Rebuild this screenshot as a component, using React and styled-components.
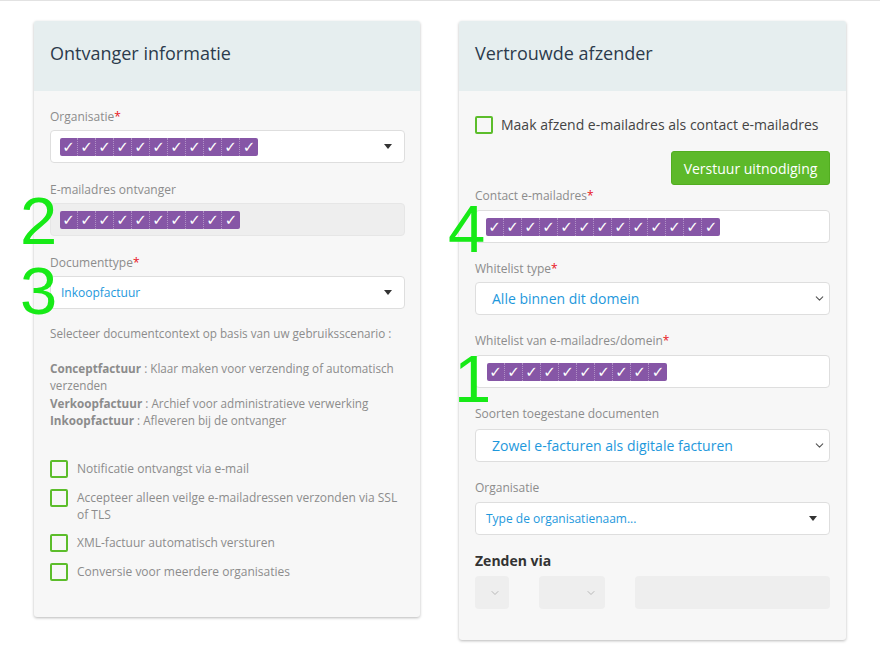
import styled, { createGlobalStyle } from "styled-components";
import { ChevronDown } from "lucide-react";

const GlobalStyle = createGlobalStyle`
  html, body {
    margin: 0;
    padding: 0;
    background: #ffffff;
    font-family: "Open Sans", "Liberation Sans", sans-serif;
  }
`;

const Page = styled.div`
  position: relative;
  border-top: 1px solid #e2e2e2;
  padding: 20px 34px 20px 34px;
  display: grid;
  grid-template-columns: 386px 387px;
  column-gap: 39px;
  align-items: start;
`;

const Card = styled.div`
  background: #f7f7f7;
  border-radius: 3px;
  box-shadow: 0 1px 3px rgba(0, 0, 0, 0.28);
  overflow: hidden;
`;

const CardHeader = styled.div`
  background: #e6eeef;
  height: 70px;
  box-sizing: border-box;
  padding: 20px 16px 0 16px;
`;

const Title = styled.h3`
  margin: 0;
  font-size: 18px;
  line-height: 24px;
  font-weight: 400;
  color: #2c3b4c;
`;

const CardBody = styled.div`
  padding: ${(p) => p.$pad || "17px 15px 36px 16px"};
`;

const Field = styled.div`
  margin-bottom: ${(p) => (p.$mb != null ? p.$mb : 18)}px;
`;

const Label = styled.div`
  font-size: 12px;
  line-height: 18px;
  color: #8c8c8c;
  margin-bottom: ${(p) => (p.$mb != null ? p.$mb : 4)}px;
`;

const Req = styled.span`
  color: #e8141b;
`;

const Control = styled.div`
  height: 33px;
  box-sizing: border-box;
  display: flex;
  align-items: center;
  justify-content: space-between;
  padding: 0 ${(p) => p.$pr || 12}px 0 ${(p) => p.$pl || 9}px;
  background: ${(p) => (p.$disabled ? "#eeeeee" : "#ffffff")};
  border: 1px solid ${(p) => (p.$disabled ? "#e6e6e6" : "#dedede")};
  border-radius: 4px;
`;

const ValueText = styled.span`
  font-size: ${(p) => p.$size || 12}px;
  color: #1e98dc;
  white-space: nowrap;
`;

const Caret = styled.span`
  width: 0;
  height: 0;
  border-left: 4.5px solid transparent;
  border-right: 4.5px solid transparent;
  border-top: 5px solid #333;
`;

const Redacted = styled.span`
  display: inline-flex;
  height: 18px;
  background: #8656a6;
  border-radius: 2px;
`;

const Tick = styled.span`
  width: 18px;
  height: 18px;
  display: flex;
  align-items: center;
  justify-content: center;
  color: #ffffff;
  font-family: "DejaVu Sans", sans-serif;
  font-size: 15px;
  box-sizing: border-box;
  border-right: 1px dotted rgba(255, 255, 255, 0.35);
  &:last-child {
    border-right: none;
  }
`;

const Help = styled.div`
  font-size: 11.7px;
  line-height: 17.4px;
  color: #8c8c8c;
  margin-top: -2px;
  b {
    font-weight: 700;
  }
`;

const Checks = styled.div`
  margin-top: 31px;
  display: flex;
  flex-direction: column;
  gap: 11px;
`;

const CheckRow = styled.label`
  display: flex;
  align-items: flex-start;
  gap: ${(p) => p.$gap || 9}px;
  font-size: ${(p) => p.$size || 12}px;
  line-height: ${(p) => p.$lh || 17}px;
  color: ${(p) => p.$color || "#8c8c8c"};
`;

const Box = styled.span`
  flex: 0 0 auto;
  width: 18px;
  height: 18px;
  box-sizing: border-box;
  border: 2px solid #5cbd2b;
  border-radius: 2px;
  background: #f7f7f7;
`;

const ButtonRow = styled.div`
  display: flex;
  justify-content: flex-end;
  margin-top: 17px;
  margin-bottom: 2px;
`;

const Button = styled.button`
  height: 34px;
  width: 159px;
  border: 1px solid #52ad20;
  background: #5db92a;
  color: #ffffff;
  border-radius: 3px;
  font-family: "Open Sans", "Liberation Sans", sans-serif;
  font-size: 14px;
  padding: 0;
  cursor: pointer;
`;

const SubTitle = styled.div`
  font-size: 14px;
  font-weight: 700;
  line-height: 20px;
  color: #333333;
  margin-bottom: 5px;
`;

const SendRow = styled.div`
  display: flex;
  gap: 30px;
`;

const GreyBox = styled.div`
  height: 33px;
  width: ${(p) => p.$w}px;
  flex: ${(p) => (p.$grow ? "1 1 auto" : "0 0 auto")};
  box-sizing: border-box;
  background: #eeeeee;
  border-radius: 4px;
  display: flex;
  align-items: center;
  justify-content: flex-end;
  padding-right: 8px;
  color: #b8b8b8;
`;

const Mark = styled.span`
  position: absolute;
  left: ${(p) => p.$x}px;
  top: ${(p) => p.$y}px;
  font-family: "Liberation Sans", Arial, sans-serif;
  font-size: 67px;
  line-height: 1;
  color: #17ea17;
  pointer-events: none;
`;

function Ticks({ n }) {
  return (
    <Redacted>
      {Array.from({ length: n }).map((_, i) => (
        <Tick key={i}>✓</Tick>
      ))}
    </Redacted>
  );
}

function App() {
  return (
    <>
      <GlobalStyle />
      <Page>
        <Card>
          <CardHeader>
            <Title>Ontvanger informatie</Title>
          </CardHeader>
          <CardBody>
            <Field>
              <Label>
                Organisatie<Req>*</Req>
              </Label>
              <Control>
                <Ticks n={11} />
                <Caret />
              </Control>
            </Field>
            <Field>
              <Label>E-mailadres ontvanger</Label>
              <Control $disabled>
                <Ticks n={10} />
              </Control>
            </Field>
            <Field>
              <Label>
                Documenttype<Req>*</Req>
              </Label>
              <Control $pl={10}>
                <ValueText>Inkoopfactuur</ValueText>
                <Caret />
              </Control>
            </Field>
            <Help>
              Selecteer documentcontext op basis van uw gebruiksscenario :
              <br />
              <br />
              <b>Conceptfactuur</b> : Klaar maken voor verzending of automatisch verzenden
              <br />
              <b>Verkoopfactuur</b> : Archief voor administratieve verwerking
              <br />
              <b>Inkoopfactuur</b> : Afleveren bij de ontvanger
            </Help>
            <Checks>
              <CheckRow>
                <Box />
                <span>Notificatie ontvangst via e-mail</span>
              </CheckRow>
              <CheckRow>
                <Box />
                <span>Accepteer alleen veilge e-mailadressen verzonden via SSL of TLS</span>
              </CheckRow>
              <CheckRow>
                <Box />
                <span>XML-factuur automatisch versturen</span>
              </CheckRow>
              <CheckRow>
                <Box />
                <span>Conversie voor meerdere organisaties</span>
              </CheckRow>
            </Checks>
          </CardBody>
        </Card>

        <Card>
          <CardHeader>
            <Title>Vertrouwde afzender</Title>
          </CardHeader>
          <CardBody $pad="25px 16px 31px 16px">
            <CheckRow $size={14} $lh={18} $gap={8} $color="#444">
              <Box />
              <span>Maak afzend e-mailadres als contact e-mailadres</span>
            </CheckRow>
            <ButtonRow>
              <Button>Verstuur uitnodiging</Button>
            </ButtonRow>
            <Field $mb={17}>
              <Label $mb={5}>
                Contact e-mailadres<Req>*</Req>
              </Label>
              <Control $pl={10}>
                <Ticks n={13} />
              </Control>
            </Field>
            <Field $mb={17}>
              <Label $mb={4}>
                Whitelist type<Req>*</Req>
              </Label>
              <Control $pl={16} $pr={3}>
                <ValueText $size={14}>Alle binnen dit domein</ValueText>
                <ChevronDown size={13} strokeWidth={2} color="#555" />
              </Control>
            </Field>
            <Field $mb={17}>
              <Label $mb={5}>
                Whitelist van e-mailadres/domein<Req>*</Req>
              </Label>
              <Control $pl={11}>
                <Ticks n={10} />
              </Control>
            </Field>
            <Field $mb={17}>
              <Label $mb={6}>Soorten toegestane documenten</Label>
              <Control $pl={16} $pr={3}>
                <ValueText $size={14}>Zowel e-facturen als digitale facturen</ValueText>
                <ChevronDown size={13} strokeWidth={2} color="#555" />
              </Control>
            </Field>
            <Field $mb={16}>
              <Label $mb={5}>Organisatie</Label>
              <Control $pl={10}>
                <ValueText>Type de organisatienaam...</ValueText>
                <Caret />
              </Control>
            </Field>
            <SubTitle>Zenden via</SubTitle>
            <SendRow>
              <GreyBox $w={34}>
                <ChevronDown size={12} strokeWidth={2} />
              </GreyBox>
              <GreyBox $w={66}>
                <ChevronDown size={12} strokeWidth={2} />
              </GreyBox>
              <GreyBox $grow />
            </SendRow>
          </CardBody>
        </Card>

        <Mark $x={20} $y={186}>2</Mark>
        <Mark $x={20} $y={256}>3</Mark>
        <Mark $x={448} $y={194}>4</Mark>
        <Mark $x={454} $y={344}>1</Mark>
      </Page>
    </>
  );
}

export default App;
